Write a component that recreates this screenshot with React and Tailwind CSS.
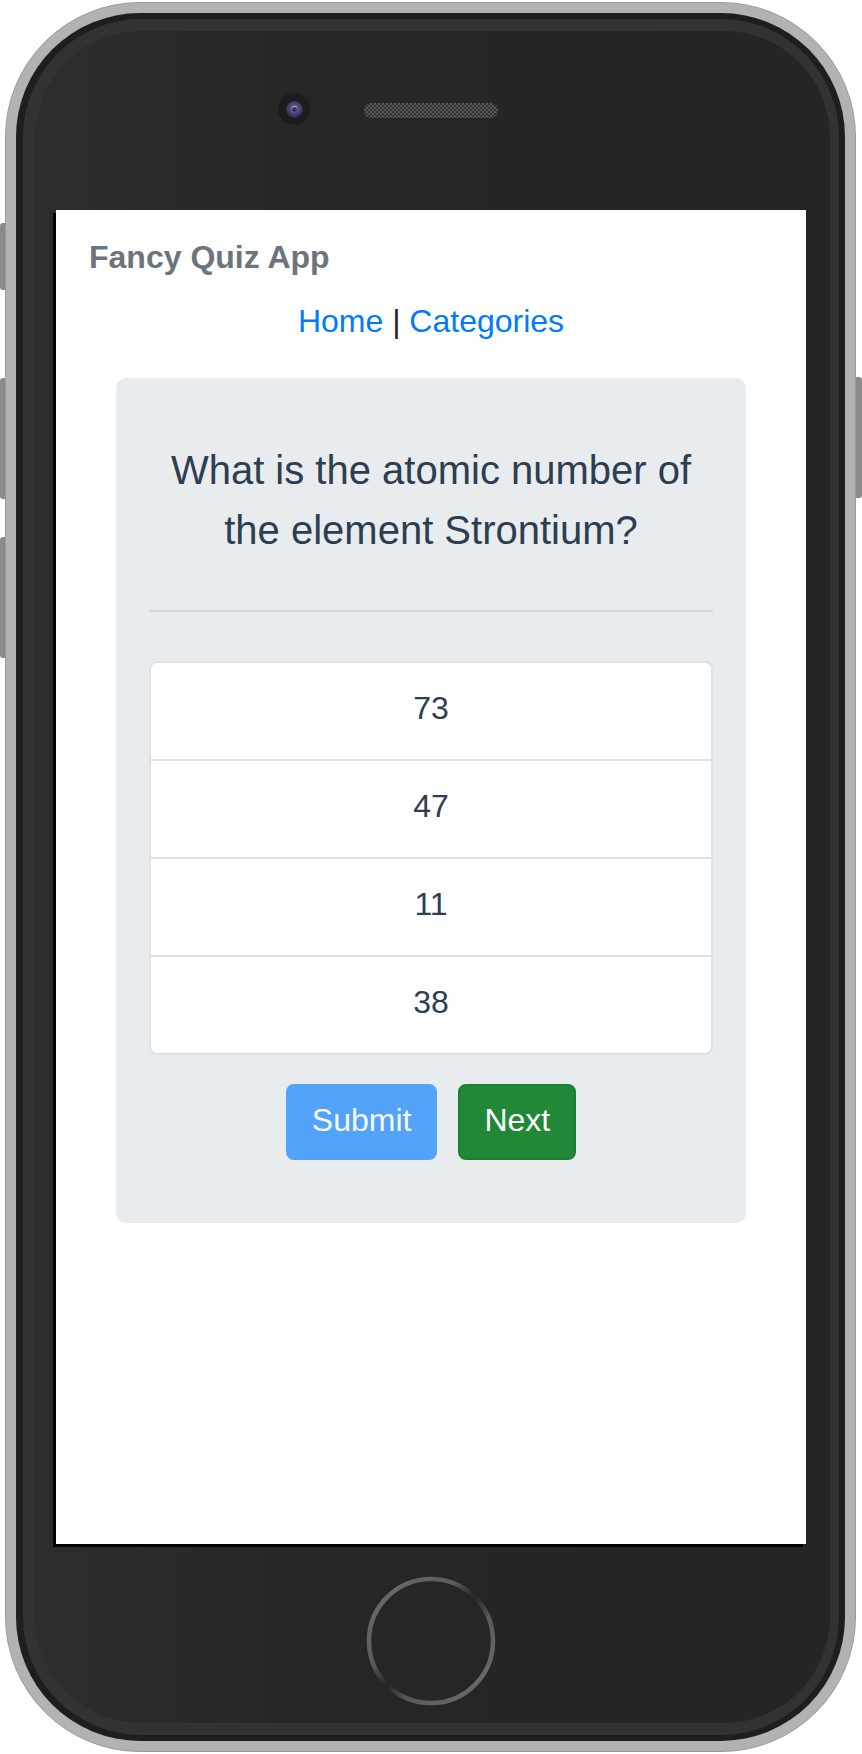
import React from "react";

const options = ["73", "47", "11", "38"];

function Camera() {
  return (
    <div className="absolute left-[-85px] top-[-9px] w-[30px] h-[30px] rounded-full bg-[#1c1c1c] shadow-[0_0_2px_#111] flex items-center justify-center">
      <div className="w-[17px] h-[17px] rounded-full bg-[radial-gradient(circle_at_50%_45%,#9a8fc4_0%,#5a4d8a_30%,#2c2545_75%)] flex items-center justify-center">
        <div className="w-[5px] h-[5px] rounded-full bg-[#3a3358] shadow-[0_-1px_1px_#b9b2d6]" />
      </div>
    </div>
  );
}

function HomeButton() {
  return (
    <svg width="130" height="130" viewBox="0 0 130 130">
      <defs>
        <linearGradient id="ring" x1="0" y1="0" x2="1" y2="1">
          <stop offset="0" stopColor="#707070" />
          <stop offset="0.36" stopColor="#5a5a5a" />
          <stop offset="0.5" stopColor="#262626" />
          <stop offset="0.64" stopColor="#5a5a5a" />
          <stop offset="1" stopColor="#707070" />
        </linearGradient>
      </defs>
      <circle cx="65" cy="65" r="62" fill="none" stroke="url(#ring)" strokeWidth="4.5" />
    </svg>
  );
}

export default function App() {
  return (
    <div className="w-[862px] h-[1754px] bg-white pt-[2px] flex font-['Liberation_Sans',Arial,sans-serif]">
      {/* left side keys */}
      <div className="w-[5px] flex flex-col">
        <div className="mt-[221px] h-[67px] rounded-l-[3px] bg-[#8a8a8f]" />
        <div className="mt-[88px] h-[121px] rounded-l-[3px] bg-[#8a8a8f]" />
        <div className="mt-[38px] h-[121px] rounded-l-[3px] bg-[#8a8a8f]" />
      </div>

      {/* phone shell */}
      <div className="w-[851px] h-[1750px] rounded-[135px] bg-[#b2b2b2] border border-[#9c9c9c] p-[10px]">
        <div className="h-full rounded-[124px] bg-[#1e1e1e] pl-[7px] pr-[6px] py-[6px]">
          <div className="h-full rounded-[118px] bg-[#323232] pl-[12px] pr-[9px] py-[12px]">
            <div className="h-full rounded-[106px] bg-[linear-gradient(90deg,#2d2d2d_0%,#262626_35%,#252525_100%)] flex flex-col">
              {/* top bezel */}
              <div className="h-[179px] flex justify-center pr-[3px]">
                <div className="relative mt-[72px] w-[134px] h-[15px]">
                  <Camera />
                  <div className="w-full h-full rounded-full bg-[image:repeating-conic-gradient(#5e5e5e_0%_25%,#343434_0%_50%)] bg-[length:4px_4px] opacity-90" />
                </div>
              </div>

              {/* screen */}
              <div className="pl-[21px]">
                <div className="w-[750px] h-[1334px] bg-white shadow-[-3px_3px_0_#000] flex flex-col">
                  <div className="pl-[33px] pt-[23px] text-[32px] leading-[48px] font-bold text-[#6c757d]">
                    Fancy Quiz App
                  </div>
                  <div className="mt-[16px] text-center text-[32px] leading-[48px] text-[#212529]">
                    <a className="text-[#007bff]">Home</a> | <a className="text-[#007bff]">Categories</a>
                  </div>

                  <div className="mt-[33px] mx-[60px] rounded-[10px] bg-[#e9ecef] px-[33px] pt-[62px] pb-[63px]">
                    <h2 className="text-center text-[40px] leading-[60px] text-[#2c3e50]">
                      What is the atomic number of the element Strontium?
                    </h2>
                    <div className="mt-[50px] h-[2px] bg-[#d3d6d9]" />
                    <ul className="mt-[49px] rounded-[8px] border-2 border-[#dfe2e5] bg-white">
                      {options.map((opt, i) => (
                        <li
                          key={opt}
                          className={`pt-[21px] pb-[27px] text-center text-[32px] leading-[48px] text-[#2c3e50] ${
                            i > 0 ? "border-t-2 border-[#dfe2e5]" : ""
                          }`}
                        >
                          {opt}
                        </li>
                      ))}
                    </ul>
                    <div className="mt-[29px] flex justify-center gap-[21px]">
                      <button className="px-[24px] pt-[10px] pb-[14px] border-2 border-[#52a3f9] bg-[#52a3f9] rounded-[8px] text-[32px] leading-[48px] text-[#f7f9fc]">
                        Submit
                      </button>
                      <button className="px-[24px] pt-[10px] pb-[14px] border-2 border-[#1e7e34] bg-[#218838] rounded-[8px] text-[32px] leading-[48px] text-white">
                        Next
                      </button>
                    </div>
                  </div>
                </div>
              </div>

              {/* bottom bezel */}
              <div className="flex-1 flex justify-center pr-[3px]">
                <div className="mt-[32px]">
                  <HomeButton />
                </div>
              </div>
            </div>
          </div>
        </div>
      </div>

      {/* right side key */}
      <div className="w-[6px] flex flex-col">
        <div className="mt-[375px] h-[121px] rounded-r-[3px] bg-[#8a8a8f]" />
      </div>
    </div>
  );
}
